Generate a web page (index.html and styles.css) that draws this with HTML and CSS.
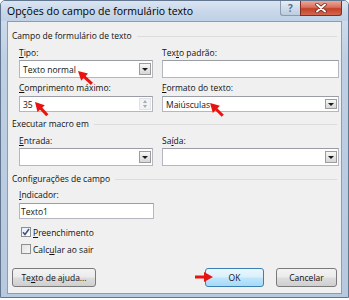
FILE: index.html
```html
<!DOCTYPE html>
<html>
<head>
<meta charset="utf-8">
<link rel="stylesheet" href="styles.css">
</head>
<body>
<div class="window">
  <div class="titlebar">
    <span class="title">Opções do campo de formulário texto</span>
    <div class="caps">
      <span class="cap help">?</span>
      <span class="cap close"><svg width="12" height="10" viewBox="0 0 12 10"><path d="M2 1.5 L10 8.5 M10 1.5 L2 8.5" stroke="#5a2018" stroke-width="3.4" stroke-linecap="round"/><path d="M2 1.5 L10 8.5 M10 1.5 L2 8.5" stroke="#ffffff" stroke-width="2" stroke-linecap="round"/></svg></span>
    </div>
  </div>
  <div class="client">
    <div class="ghead g1"><span>Campo de formulário de texto</span></div>
    <div class="grid r1">
      <label class="lbl"><u>T</u>ipo:</label>
      <label class="lbl">Tex<u>t</u>o padrão:</label>
      <div class="box combo h18"><span class="val">Texto normal</span><span class="drop"></span></div>
      <div class="box h18 wide"></div>
    </div>
    <div class="grid r2">
      <label class="lbl"><u>C</u>omprimento máximo:</label>
      <label class="lbl"><u>F</u>ormato do texto:</label>
      <div class="box combo h16"><span class="val">35</span><span class="spin"><i class="up"></i><i class="dn"></i></span></div>
      <div class="box combo h16"><span class="val">Maiúsculas</span><span class="drop"></span></div>
    </div>
    <div class="ghead g2"><span>Executar macro em</span></div>
    <div class="grid r3">
      <label class="lbl"><u>E</u>ntrada:</label>
      <label class="lbl">Sa<u>í</u>da:</label>
      <div class="box combo h18"><span class="val"></span><span class="drop"></span></div>
      <div class="box combo h18"><span class="val"></span><span class="drop"></span></div>
    </div>
    <div class="ghead g3"><span>Configurações de campo</span></div>
    <div class="single">
      <label class="lbl"><u>I</u>ndicador:</label>
      <div class="box h16 ind"><span class="val">Texto1</span></div>
    </div>
    <div class="check c1"><span class="cb on"><svg width="8" height="8" viewBox="0 0 8 8"><path d="M1 4.2 L3 6.5 L7 1" fill="none" stroke="#3d5487" stroke-width="1.6"/></svg></span><span><u>P</u>reenchimento</span></div>
    <div class="check c2"><span class="cb"></span><span>Calc<u>u</u>lar ao sair</span></div>
    <div class="buttons">
      <button class="btn help-btn">Te<u>x</u>to de ajuda...</button>
      <span class="spacer"></span>
      <button class="btn ok">OK</button>
      <button class="btn cancel">Cancelar</button>
    </div>
  </div>
  <svg class="arrows" width="349" height="300" viewBox="0 0 349 300">
    <g fill="#e8130f" stroke="#e8130f">
      <g transform="translate(78 71) rotate(-137)"><line x1="-19" y1="0" x2="-6" y2="0" stroke-width="3"/><polygon points="0,0 -9,-5 -9,5" stroke="none"/></g>
      <g transform="translate(35 102) rotate(-133)"><line x1="-18" y1="0" x2="-6" y2="0" stroke-width="3"/><polygon points="0,0 -9,-5 -9,5" stroke="none"/></g>
      <g transform="translate(210 103) rotate(-135)"><line x1="-18" y1="0" x2="-6" y2="0" stroke-width="3"/><polygon points="0,0 -9,-5 -9,5" stroke="none"/></g>
      <g transform="translate(213 277)"><line x1="-18" y1="0" x2="-6" y2="0" stroke-width="3"/><polygon points="0,0 -9,-5 -9,5" stroke="none"/></g>
    </g>
  </svg>
</div>
</body>
</html>
```
FILE: styles.css
```css
html, body {
  margin: 0;
  padding: 0;
  background: #ffffff;
}
body {
  width: 349px;
  height: 300px;
  overflow: hidden;
  font-family: "Open Sans", "Liberation Sans", sans-serif;
  font-size: 8.5px;
  color: #111;
}
.window {
  position: relative;
  box-sizing: border-box;
  width: 349px;
  height: 298px;
  border: 1px solid #62778f;
  border-radius: 5px 5px 0 0;
  background: linear-gradient(180deg, #d3e0ee 0%, #bfd0e4 20%, #b6c9df 100%);
  display: flex;
  flex-direction: column;
}
.titlebar {
  height: 20px;
  display: flex;
  align-items: flex-start;
  padding-left: 6px;
  padding-right: 6px;
  background: linear-gradient(180deg, #dae5f2 0%, #c9d8ea 50%, #bfd1e6 100%);
  border-radius: 4px 4px 0 0;
}
.title {
  font-size: 10.5px;
  line-height: 20px;
  color: #000;
  flex: 1;
}
.caps {
  display: flex;
}
.cap {
  box-sizing: border-box;
  height: 15px;
  display: flex;
  align-items: center;
  justify-content: center;
}
.help {
  width: 20px;
  border: 1px solid #8a9bb0;
  border-top: none;
  border-right: none;
  border-radius: 0 0 0 3px;
  background: linear-gradient(180deg, #e6eef7 0%, #cfdcea 50%, #bccde1 100%);
  color: #5c6f88;
  font-size: 10px;
  font-weight: bold;
}
.close {
  width: 42px;
  border: 1px solid #7a3126;
  border-top: none;
  border-radius: 0 0 3px 0;
  background: linear-gradient(180deg, #e9a999 0%, #d7705a 45%, #c5402a 55%, #d5674f 100%);
}
.client {
  flex: 1;
  margin: 0 6px 3px 6px;
  box-sizing: border-box;
  border: 1px solid #8a9db4;
  background: #f0f0f0;
  padding: 0 4px 0 4px;
  display: flex;
  flex-direction: column;
}
.ghead {
  display: flex;
  align-items: center;
  height: 12px;
  line-height: 12px;
}
.ghead::after {
  content: "";
  flex: 1;
  border-top: 1px solid #dcdcdc;
  margin-left: 5px;
}
.g1 { margin-top: 8px; }
.g2 { margin-top: 6px; }
.g3 { margin-top: 7px; }
.grid {
  display: grid;
  grid-template-columns: 134px 177px;
  column-gap: 9px;
  margin-left: 7px;
}
.lbl {
  display: block;
  height: 12px;
  line-height: 12px;
}
.r1 { margin-top: 5px; }
.r1 .lbl { margin-bottom: 1px; }
.r2 { margin-top: 4px; }
.r2 .lbl { margin-bottom: 2px; }
.r3 { margin-top: 5px; }
.r3 .lbl { margin-bottom: 1px; }
.single {
  margin-left: 7px;
  margin-top: 4px;
  width: 135px;
}
.single .lbl { margin-bottom: 2px; }
.box {
  box-sizing: border-box;
  background: #ffffff;
  border: 1px solid #b4b7bf;
  border-top-color: #9a9da6;
  display: flex;
  align-items: stretch;
}
.h18 { height: 18px; }
.h16 { height: 16px; }
.val {
  flex: 1;
  padding-left: 3px;
  display: flex;
  align-items: center;
  color: #111;
}
.ind .val { padding-left: 1px; }
.drop {
  box-sizing: border-box;
  width: 12px;
  margin: 2px 1px 2px 0;
  border: 1px solid #9c9c9c;
  background: linear-gradient(180deg, #f7f7f7 0%, #e6e6e6 50%, #d6d6d6 100%);
  display: flex;
  align-items: center;
  justify-content: center;
}
.drop::after {
  content: "";
  width: 0;
  height: 0;
  border-left: 3px solid transparent;
  border-right: 3px solid transparent;
  border-top: 3px solid #1a1a1a;
}
.spin {
  box-sizing: border-box;
  width: 12px;
  margin: 1px 1px 1px 0;
  display: flex;
  flex-direction: column;
  border: 1px solid #e0e2e6;
  background: #f2f3f5;
}
.spin i {
  flex: 1;
  display: flex;
  align-items: center;
  justify-content: center;
}
.spin i::after {
  content: "";
  width: 0;
  height: 0;
  border-left: 2.5px solid transparent;
  border-right: 2.5px solid transparent;
}
.spin .up::after { border-bottom: 3px solid #a8abb3; }
.spin .dn::after { border-top: 3px solid #a8abb3; }
.check {
  display: flex;
  align-items: center;
  height: 12px;
  margin-left: 9px;
}
.c1 { margin-top: 7px; }
.c2 { margin-top: 5px; }
.cb {
  box-sizing: border-box;
  width: 10px;
  height: 10px;
  border: 1px solid #8e8f8f;
  background: linear-gradient(135deg, #e2e2e2 0%, #f7f7f7 100%);
  margin-right: 2px;
  display: flex;
  align-items: center;
  justify-content: center;
}
.cb.on { background: linear-gradient(135deg, #e8ecf2 0%, #ffffff 100%); }
.buttons {
  display: flex;
  margin-top: 13px;
  height: 19px;
}
.spacer { flex: 1; }
.btn {
  box-sizing: border-box;
  height: 19px;
  padding: 0;
  font-family: inherit;
  font-size: 8.5px;
  color: #111;
  border: 1px solid #7a7a7a;
  border-radius: 3px;
  background: linear-gradient(180deg, #f3f3f3 0%, #ebebeb 48%, #dddddd 52%, #cfcfcf 100%);
}
.help-btn { width: 84px; }
.ok {
  width: 59px;
  margin-right: 12px;
  border-color: #3c7fb1;
  background: linear-gradient(180deg, #eaf6fd 0%, #d9f0fc 48%, #bee6fd 52%, #a7d9f5 100%);
}
.cancel { width: 61px; }
.arrows {
  position: absolute;
  left: -1px;
  top: -1px;
  pointer-events: none;
}
```
